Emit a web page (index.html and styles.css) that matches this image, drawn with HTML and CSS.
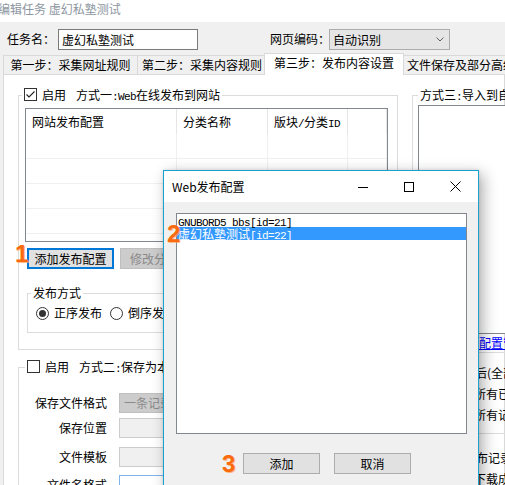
FILE: index.html
```html
<!DOCTYPE html>
<html lang="zh-CN">
<head>
<meta charset="utf-8">
<title>编辑任务</title>
<link rel="stylesheet" href="styles.css">
</head>
<body>
<div class="wintitle">编辑任务 虚幻私塾测试</div>
<div class="toprow">
  <span class="lbl lbl-name">任务名：</span>
  <div class="textbox name-box">虚幻私塾测试</div>
  <span class="lbl lbl-enc">网页编码：</span>
  <div class="combo enc-box"><span>自动识别</span><svg class="chev" width="8" height="5" viewBox="0 0 8 5"><polyline points="0.5,0.5 4,4 7.5,0.5" fill="none" stroke="#606060" stroke-width="1"/></svg></div>
</div>
<div class="tabs">
  <div class="tab t1">第一步：采集网址规则</div>
  <div class="tab t2">第二步：采集内容规则</div>
  <div class="tab t3">第三步：发布内容设置</div>
  <div class="tab t4">文件保存及部分高级设置</div>
</div>
<div class="panel">
  <div class="col-left">
    <fieldset class="grp g1">
      <legend><span class="cb"><svg width="11" height="11" viewBox="0 0 11 11"><polyline points="1.5,5.5 4,8 9.5,2.5" fill="none" stroke="#222" stroke-width="1.1"/></svg></span>启用<span class="lg-text">方式一<span class="m">:Web</span>在线发布到网站</span></legend>
      <div class="listview">
        <div class="lv-row lv-head">
          <div>网站发布配置</div>
          <div>分类名称</div>
          <div>版块<span class="m">/</span>分类<span class="m">ID</span></div>
          <div></div>
        </div>
        <div class="lv-row"><div></div><div></div><div></div><div></div></div>
        <div class="lv-row"><div></div><div></div><div></div><div></div></div>
        <div class="lv-row"><div></div><div></div><div></div><div></div></div>
        <div class="lv-row"><div></div><div></div><div></div><div></div></div>
      </div>
      <div class="btnrow">
        <div class="btn btn-focus">添加发布配置</div>
        <div class="btn btn-dis">修改分类映射</div>
      </div>
      <fieldset class="grp g-pub">
        <legend>发布方式</legend>
        <div class="radios">
          <span class="radio on"></span><span class="rtext">正序发布</span>
          <span class="radio r2"></span><span class="rtext">倒序发布</span>
        </div>
      </fieldset>
    </fieldset>
    <fieldset class="grp g2">
      <legend><span class="cb"></span>启用<span class="lg-text">方式二<span class="m">:</span>保存为本地文件</span></legend>
      <div class="frow fr1"><span class="flbl">保存文件格式</span><div class="fin fin-dis">一条记录保存为一个文件</div></div>
      <div class="frow fr2"><span class="flbl">保存位置</span><div class="fin"></div></div>
      <div class="frow fr3"><span class="flbl">文件模板</span><div class="fin"></div></div>
      <div class="frow fr4"><span class="flbl">文件名格式</span><div class="fin fin-hot"></div></div>
    </fieldset>
  </div>
  <div class="col-right">
    <fieldset class="grp g3">
      <legend>方式三<span class="m">:</span>导入到自定义数据库</legend>
      <div class="dbbox"></div>
      <div class="link">发布配置管理</div>
      <div class="sep"></div>
      <div class="rl rl1">发布后(全部)</div>
      <div class="rl rl2">更新所有已发布数据</div>
      <div class="rl rl3">更新所有记录</div>
      <div class="sep sep2"></div>
      <div class="rl rl4">查看发布记录</div>
      <div class="rl rl5">仅下载成功的图片</div>
    </fieldset>
  </div>
</div>

<div class="dlg">
  <div class="dlg-title">
    <span class="tt">Web发布配置</span>
    <span class="tbtn"><svg width="10" height="10" viewBox="0 0 10 10"><line x1="0" y1="5.5" x2="10" y2="5.5" stroke="#000" stroke-width="1"/></svg></span>
    <span class="tbtn"><svg width="10" height="10" viewBox="0 0 10 10"><rect x="0.5" y="0.5" width="9" height="9" fill="none" stroke="#000" stroke-width="1"/></svg></span>
    <span class="tbtn"><svg width="11" height="11" viewBox="0 0 11 11"><path d="M0.5 0.5 L10.5 10.5 M10.5 0.5 L0.5 10.5" stroke="#000" stroke-width="1"/></svg></span>
  </div>
  <div class="dlg-body">
    <div class="lb">
      <div class="lb-item"><span class="m">GNUBORD5 bbs[id=21]</span></div>
      <div class="lb-item sel">虚幻私塾测试<span class="m">[id=22]</span></div>
    </div>
    <div class="dlg-btns">
      <div class="btn dbtn">添加</div>
      <div class="btn dbtn">取消</div>
    </div>
  </div>
</div>

<div class="badge b1">1</div>
<div class="badge b2">2</div>
<div class="badge b3">3</div>
</body>
</html>
```
FILE: styles.css
```css
* { box-sizing: border-box; }
html, body { margin: 0; padding: 0; }
body {
  width: 505px;
  height: 485px;
  overflow: hidden;
  position: relative;
  background: #f0f0f0;
  font-family: "Noto Sans CJK SC", "Noto Sans", sans-serif;
  font-size: 12px;
  color: #000;
}
.m {
  font-family: "Liberation Mono", monospace;
  font-size: 11px;
  letter-spacing: -0.6px;
}

/* window caption */
.wintitle {
  height: 22px;
  background: #fff;
  color: #8d96a1;
  line-height: 17px;
  text-indent: -2px;
  white-space: nowrap;
}

/* task name row */
.toprow {
  height: 31px;
  display: flex;
  align-items: center;
  padding-top: 3px;
}
.lbl { white-space: nowrap; line-height: 14px; flex: none; }
.lbl-name { margin-left: 7px; width: 51px; }
.lbl-enc { margin-left: 72px; width: 59px; }
.textbox {
  height: 21px;
  border: 1px solid #7a7a7a;
  background: #fff;
  line-height: 19px;
  padding-left: 3px;
  flex: none;
}
.name-box { width: 140px; }
.combo {
  height: 21px;
  width: 121px;
  border: 1px solid #acacac;
  background: #e5e5e5;
  display: flex;
  align-items: center;
  justify-content: space-between;
  padding: 0 5px 0 3px;
  line-height: 19px;
  flex: none;
}

/* tabs */
.tabs {
  display: flex;
  align-items: flex-end;
  height: 21px;
  padding-left: 3px;
  position: relative;
  z-index: 2;
}
.tab {
  height: 19px;
  border: 1px solid #d9d9d9;
  border-bottom: 0;
  border-right: 0;
  background: #f0f0f0;
  text-align: center;
  line-height: 18px;
  white-space: nowrap;
  flex: none;
}
.t1 { width: 134px; }
.t2 { width: 129px; }
.t3 {
  width: 140px;
  height: 22px;
  margin: 0 -2px -1px;
  background: #fff;
  border-right: 1px solid #d9d9d9;
  line-height: 17px;
  position: relative;
  z-index: 3;
}
.t4 { width: 150px; text-align: left; padding-left: 4px; }

/* tab page */
.panel {
  margin-left: 3px;
  border: 1px solid #d9d9d9;
  background: #fff;
  height: 420px;
  display: flex;
  align-items: flex-start;
}
.col-left { margin-left: 14px; width: 380px; flex: none; }
.col-right { margin-left: 14px; width: 300px; flex: none; }

fieldset {
  margin: 0;
  border: 1px solid #dcdcdc;
  min-width: 0;
}
legend {
  padding: 0 2px;
  line-height: 14px;
  height: 14px;
  white-space: nowrap;
}
.cb {
  display: inline-block;
  width: 13px;
  height: 13px;
  border: 1px solid #333;
  background: #fff;
  vertical-align: top;
  margin-right: 5px;
  position: relative;
}
.cb svg { display: block; }
.lg-text { margin-left: 10px; }

.g1 { margin-top: 13px; width: 380px; padding: 6px 0 16px 6px; }
.g1 > legend { margin-left: -3px; }

.listview {
  width: 363px;
  height: 134px;
  border: 1px solid #828790;
  background: #fff;
  overflow: hidden;
}
.lv-row {
  display: grid;
  grid-template-columns: 151px 91px 80px 1fr;
  height: 25px;
  border-bottom: 1px solid #f0f0f0;
}
.lv-row > div { border-right: 1px solid #f0f0f0; }
.lv-head { border-bottom: 0; }
.lv-head > div {
  padding-left: 6px;
  line-height: 25px;
  border-right-color: #e5e5e5;
  white-space: nowrap;
}

.btnrow { display: flex; margin: 6px 0 0 2px; gap: 6px; }
.btn {
  height: 21px;
  border: 1px solid #adadad;
  background: #e1e1e1;
  line-height: 19px;
  text-align: center;
  white-space: nowrap;
  flex: none;
}
.btn-focus { width: 87px; border: 2px solid #0078d7; line-height: 17px; }
.btn-dis {
  width: 92px;
  background: #cccccc;
  border-color: #bfbfbf;
  color: #8a8a8a;
  text-align: left;
  padding-left: 9px;
}

.g-pub { margin: 17px 0 0 2px; width: 361px; padding: 6px 0 12px 3px; }
.radios {
  display: flex;
  align-items: center;
  height: 14px;
  line-height: 14px;
  margin-left: 5px;
}
.radio {
  width: 13px;
  height: 13px;
  border: 1px solid #333;
  border-radius: 50%;
  background: #fff;
  display: flex;
  align-items: center;
  justify-content: center;
  flex: none;
}
.radio.on::after {
  content: "";
  width: 7px;
  height: 7px;
  border-radius: 50%;
  background: #333;
}
.rtext { margin-left: 5px; white-space: nowrap; }
.r2 { margin-left: 8px; }

.g2 { margin-top: 10px; width: 380px; padding: 19px 0 0 6px; height: 140px; }
.frow { display: flex; align-items: center; height: 20px; }
.fr2 { margin-top: 5px; }
.fr3 { margin-top: 9px; }
.fr4 { margin-top: 8px; }
.flbl { width: 82px; text-align: right; margin-right: 12px; white-space: nowrap; line-height: 14px; flex: none; }
.fin {
  width: 260px;
  height: 20px;
  border: 1px solid #cccccc;
  background: #f0f0f0;
  flex: none;
}
.fin-dis {
  background: #cccccc;
  border-color: #bfbfbf;
  color: #8a8a8a;
  line-height: 18px;
  padding-left: 4px;
}
.fin-hot { border-color: #7eb4ea; background: #fff; }

.g3 { margin-top: 13px; padding: 3px 0 0 5px; width: 300px; height: 420px; }
.dbbox { width: 280px; height: 229px; border: 1px solid #828790; background: #fff; }
.link {
  color: #0000ff;
  text-decoration: underline;
  line-height: 14px;
  margin: 2px 0 0 37px;
  white-space: nowrap;
}
.sep { border-top: 1px solid #dcdcdc; margin-top: 2px; }
.sep2 { margin-top: 8px; }
.rl { height: 21px; line-height: 21px; white-space: nowrap; }
.rl1 { margin: 9px 0 0 33px; }
.rl2 { margin-left: 32px; }
.rl3 { margin-left: 32px; }
.rl4 { margin: 13px 0 0 22px; }
.rl5 { margin-left: 44px; }

/* dialog */
.dlg {
  position: absolute;
  left: 163px;
  top: 170px;
  width: 316px;
  height: 330px;
  border: 1px solid #1ba1d0;
  background: #f0f0f0;
  box-shadow: 4px 4px 14px rgba(0, 0, 0, 0.32), 0 0 3px rgba(0, 0, 0, 0.12);
  z-index: 10;
}
.dlg-title {
  height: 31px;
  background: #fff;
  display: flex;
  align-items: center;
}
.dlg-title .tt { padding-left: 8px; flex: 1; line-height: 16px; white-space: nowrap; }
.tbtn {
  width: 46px;
  height: 31px;
  display: flex;
  align-items: center;
  justify-content: center;
  flex: none;
}
.tbtn svg { display: block; }
.dlg-body { padding: 11px 0 0 12px; }
.lb {
  width: 291px;
  height: 221px;
  border: 1px solid #828790;
  background: #fff;
}
.lb-item {
  height: 13px;
  line-height: 13px;
  padding-left: 1px;
  white-space: nowrap;
}
.lb-item.sel { background: #3399ff; color: #fff; }
.dlg-btns { display: flex; gap: 14px; margin: 19px 0 0 67px; }
.dbtn { width: 77px; }

/* annotation badges */
.badge {
  position: absolute;
  font-family: "Liberation Sans", Arial, sans-serif;
  font-weight: bold;
  font-size: 24px;
  line-height: 24px;
  color: #fb6a0f;
  text-shadow: 1px 1px 0 rgba(255, 160, 90, 0.7);
  z-index: 20;
}
.b1 { left: 15px; top: 242px; }
.b2 { left: 167px; top: 222px; }
.b3 { left: 222px; top: 452px; }
```
